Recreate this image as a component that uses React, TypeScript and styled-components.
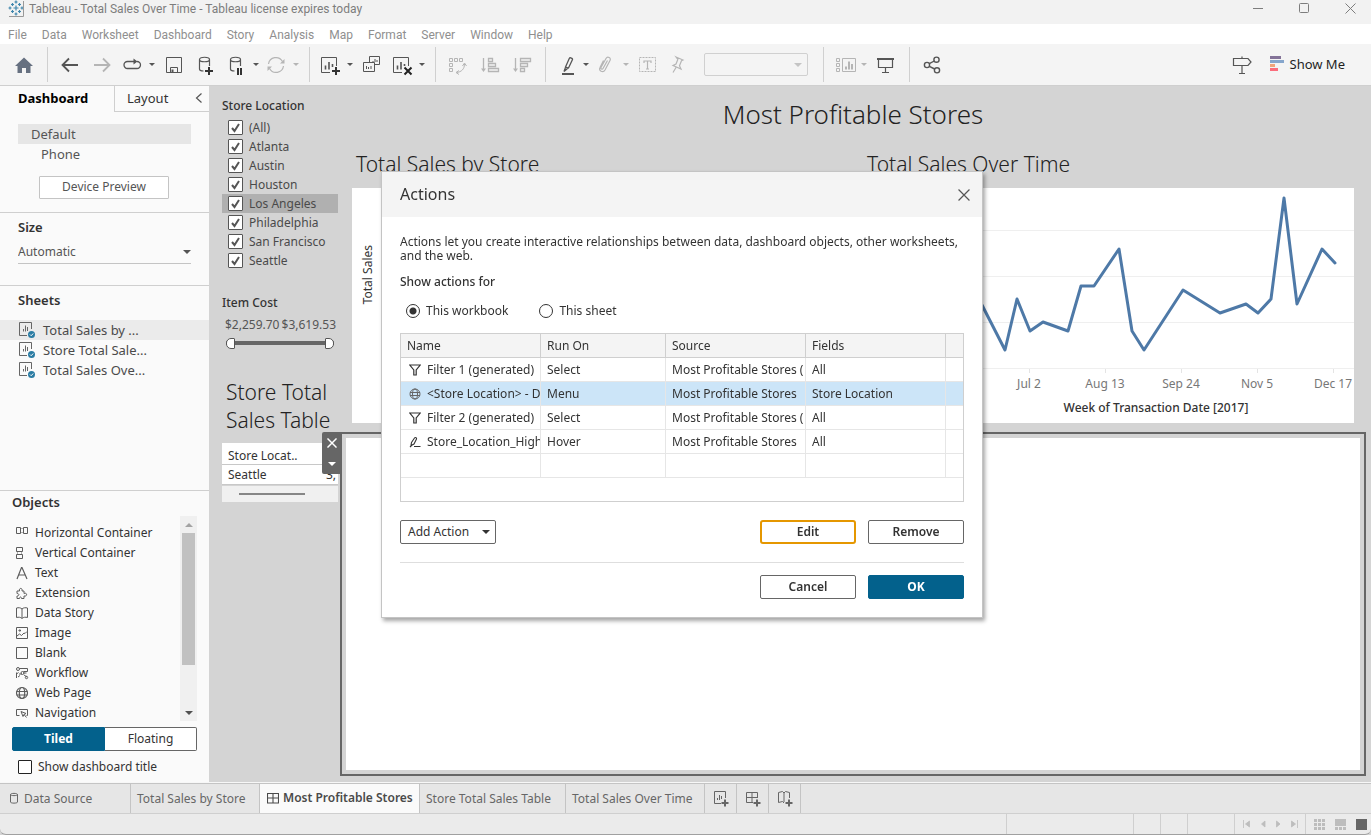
import React, { useState } from "react";
import styled, { createGlobalStyle, css } from "styled-components";

const GlobalStyle = createGlobalStyle`
  * { box-sizing: border-box; }
  body {
    margin: 0;
    background: #d4d4d4;
    color: #333;
    font-family: "Noto Sans", "Open Sans", sans-serif;
    font-size: 12px;
    line-height: 16px;
  }
  button, input, select { font: inherit; color: inherit; margin: 0; padding: 0; }
  button { background: none; border: 0; white-space: nowrap; }
  h1, h2, h3, p, ul { margin: 0; padding: 0; font-weight: 400; }
  ul { list-style: none; }
  svg { display: block; flex: none; }
`;

const Page = styled.div`
  display: flex;
  flex-direction: column;
  min-height: 100vh;
`;

/* ---------- window chrome ---------- */

const TitleBar = styled.header`
  display: flex;
  align-items: flex-start;
  height: 24px;
  padding-left: 8px;
  background: #f2f2f2;
  color: #7d7d7d;
  font-family: Roboto, "Noto Sans", sans-serif;
`;

const WindowTitle = styled.h1`
  flex: 1;
  margin-left: 5px;
  font-size: 12px;
  line-height: 18px;
`;

const WindowButton = styled.button`
  display: grid;
  place-items: center;
  width: 46px;
  height: 17px;
  padding-left: 4px;
`;

const MenuBar = styled.nav`
  display: flex;
  gap: 15px;
  height: 20px;
  padding-left: 8px;
  background: #fff;
  font-family: Roboto, "Noto Sans", sans-serif;
`;

const MenuLink = styled.a`
  color: #8f8f8f;
  font-size: 12px;
  line-height: 22px;
  text-decoration: none;
`;

const Toolbar = styled.div`
  display: flex;
  align-items: center;
  height: 42px;
  padding-left: 8px;
  background: #f4f4f4;
  border-bottom: 1px solid #cfcfcf;
`;

const ToolButton = styled.button<{ $wide?: boolean; $dim?: boolean }>`
  display: grid;
  place-items: center;
  flex: none;
  width: ${(p) => (p.$wide ? 32 : 28)}px;
  height: 32px;
  color: ${(p) => (p.$dim ? "#b5b5b5" : "#555")};
`;

const CaretButton = styled.button<{ $dim?: boolean }>`
  display: grid;
  place-items: center;
  flex: none;
  width: 12px;
  height: 32px;
  color: ${(p) => (p.$dim ? "#b5b5b5" : "#555")};
`;

const Divider = styled.span`
  flex: none;
  width: 1px;
  height: 35px;
  margin: 0 6px 0 7px;
  background: #d0d0d0;
`;

const FitBox = styled.label`
  display: flex;
  align-items: center;
  width: 104px;
  height: 23px;
  margin: 0 8px 0 12px;
  padding-right: 5px;
  border: 1px solid #d0d0d0;
  border-radius: 2px;
  color: #c4c4c4;
`;

const BareSelect = styled.select`
  flex: 1;
  min-width: 0;
  border: 0;
  outline: 0;
  background: none;
  appearance: none;
`;

const Spacer = styled.span`
  flex: 1;
`;

const ShowMe = styled.button`
  display: flex;
  align-items: center;
  gap: 5px;
  margin: 0 26px 0 14px;
  padding-bottom: 1px;
  color: #1f1f1f;
  font-size: 13px;
`;

/* ---------- side panel ---------- */

const Workspace = styled.main`
  display: flex;
  flex: 1;
  border-bottom: 1px solid #f7f7f7;
`;

const SidePanel = styled.aside`
  display: flex;
  flex-direction: column;
  flex: none;
  width: 209px;
  background: #fafafa;
`;

const PanelTabs = styled.div`
  display: flex;
  height: 26px;
  font-size: 13px;
`;

const PanelTab = styled.button<{ $active?: boolean }>`
  width: ${(p) => (p.$active ? 114 : 66)}px;
  padding: 0 0 2px ${(p) => (p.$active ? 18 : 12)}px;
  text-align: left;
  color: ${(p) => (p.$active ? "#000" : "#333")};
  font-weight: ${(p) => (p.$active ? 700 : 400)};
  ${(p) => !p.$active && css`
    border-left: 1px solid #cfcfcf;
    border-bottom: 1px solid #cfcfcf;
  `}
`;

const CollapseButton = styled.button`
  flex: 1;
  display: grid;
  place-items: center;
  padding: 0 0 2px 9px;
  border-bottom: 1px solid #cfcfcf;
  color: #555;
`;

const DeviceList = styled.ul`
  margin: 12px 18px;
  font-size: 13px;
  line-height: 20px;
`;

const DeviceItem = styled.li<{ $selected?: boolean }>`
  padding-left: ${(p) => (p.$selected ? 13 : 23)}px;
  background: ${(p) => (p.$selected ? "#e6e6e6" : "transparent")};
  color: #555;
`;

const PreviewButton = styled.button`
  align-self: flex-start;
  width: 130px;
  height: 23px;
  margin: 0 0 13px 39px;
  padding-bottom: 2px;
  border: 1px solid #c4c4c4;
  border-radius: 1px;
  color: #555;
  background: #fff;
`;

const Section = styled.section<{ $height?: number; $grow?: boolean; $tight?: boolean }>`
  border-top: 1px solid #cfcfcf;
  padding-top: ${(p) => (p.$tight ? 3 : 6)}px;
  flex: ${(p) => (p.$grow ? 1 : "none")};
  height: ${(p) => (p.$height ? p.$height + "px" : "auto")};
`;

const SectionTitle = styled.h2<{ $inset?: number }>`
  padding-left: ${(p) => p.$inset ?? 18}px;
  font-size: 13px;
  font-weight: 600;
`;

const SizeField = styled.label`
  display: flex;
  align-items: center;
  height: 24px;
  margin: 5px 18px 0;
  border-bottom: 1px solid #c4c4c4;
  color: #555;
`;

const SheetList = styled.ul`
  margin-top: 12px;
  font-size: 13px;
  line-height: 20px;
`;

const SheetItem = styled.li<{ $selected?: boolean }>`
  display: flex;
  align-items: center;
  gap: 7px;
  height: 20px;
  padding-left: 18px;
  background: ${(p) => (p.$selected ? "#ebebeb" : "transparent")};
  color: #4a4a4a;
`;

const ObjectsBox = styled.div`
  display: flex;
  height: 205px;
  margin: 6px 12px;
  overflow: hidden;
`;

const ObjectList = styled.ul`
  flex: 1;
  padding-top: 7px;
`;

const ObjectItem = styled.li`
  display: flex;
  align-items: center;
  gap: 6px;
  height: 20px;
  padding-left: 3px;
`;

const ScrollTrack = styled.div`
  display: flex;
  flex-direction: column;
  justify-content: space-between;
  align-items: center;
  width: 17px;
  background: #f0f0f0;
  color: #a3a3a3;
`;

const ScrollArrow = styled.span<{ $down?: boolean }>`
  display: grid;
  place-items: center;
  height: 17px;
  color: ${(p) => (p.$down ? "#505050" : "#a3a3a3")};
`;

const ScrollThumb = styled.span`
  width: 13px;
  height: 132px;
  margin-bottom: auto;
  background: #c1c1c1;
`;

const LayoutSwitch = styled.div`
  display: flex;
  height: 24px;
  margin: 0 12px;
`;

const SwitchButton = styled.button<{ $on?: boolean }>`
  flex: 1;
  border: 1px solid ${(p) => (p.$on ? "#03618c" : "#666")};
  border-left-width: ${(p) => (p.$on ? 1 : 0)}px;
  border-radius: ${(p) => (p.$on ? "2px 0 0 2px" : "0 2px 2px 0")};
  background: ${(p) => (p.$on ? "#03618c" : "#fff")};
  color: ${(p) => (p.$on ? "#fff" : "#333")};
  font-weight: ${(p) => (p.$on ? 700 : 400)};
`;

const TitleToggle = styled.label`
  display: flex;
  align-items: center;
  gap: 6px;
  height: 31px;
  padding-left: 18px;
`;

const PlainCheck = styled.input`
  appearance: none;
  width: 14px;
  height: 14px;
  border: 1px solid #222;
  border-radius: 1px;
  background: #fff;
`;

/* ---------- dashboard canvas ---------- */

const Canvas = styled.div`
  display: flex;
  gap: 2px;
  flex: 1;
  min-width: 0;
  padding: 12px 5px 6px 13px;
  background: #d4d4d4;
`;

const FilterColumn = styled.div`
  flex: none;
  width: 116px;
`;

const FilterTitle = styled.h3`
  font-size: 12px;
  line-height: 15px;
  font-weight: 500;
`;

const FilterRow = styled.label<{ $selected?: boolean }>`
  display: flex;
  align-items: center;
  gap: 6px;
  height: 19px;
  padding-left: 6px;
  background: ${(p) => (p.$selected ? "#b0b0b0" : "transparent")};
  color: #4a4a4a;
`;

const FilterRows = styled.div`
  margin: 5px 0 25px;
`;

const CheckWrap = styled.span`
  display: grid;
  & > * { grid-area: 1 / 1; }
  place-items: center;
  color: #555;
  pointer-events: none;
`;

const FilterCheck = styled.input`
  appearance: none;
  width: 15px;
  height: 15px;
  border: 1px solid #555;
  border-radius: 1px;
  background: #fff;
`;

const RangeValues = styled.div`
  display: flex;
  justify-content: space-between;
  margin-top: 7px;
  padding: 0 2px 0 3px;
  color: #555;
  white-space: nowrap;
`;

const RangeSlider = styled.div`
  position: relative;
  height: 11px;
  margin: 5px 4px 0;
`;

const RangeTrack = styled.div`
  height: 7px;
  border-bottom: 4px solid #666;
`;

const RangeInput = styled.input<{ $end?: boolean }>`
  position: absolute;
  inset: 0;
  width: 100%;
  height: 11px;
  appearance: none;
  background: none;
  pointer-events: none;
  &::-webkit-slider-thumb {
    appearance: none;
    width: 9px;
    height: 11px;
    border: 1px solid #555;
    border-radius: ${(p) => (p.$end ? "1px 5px 5px 1px" : "5px 1px 1px 5px")};
    background: #fff;
    pointer-events: auto;
  }
`;

const SideTitle = styled.h2`
  margin: 29px 0 9px;
  padding-left: 4px;
  font-size: 21px;
  line-height: 28px;
  font-weight: 300;
  color: #222;
`;

const MiniTable = styled.table`
  width: 100%;
  border-collapse: separate;
  border-spacing: 0;
  table-layout: fixed;
  background: #fff;
  th, td {
    height: 20px;
    padding: 0 0 0 6px;
    border-bottom: 1px solid #c8c8c8;
    text-align: left;
    font-size: 12px;
    font-weight: 400;
    white-space: nowrap;
    overflow: hidden;
  }
  th { height: 22px; padding-top: 4px; }
  td:last-child { padding: 0 2px 0 0; text-align: right; }
`;

const MiniScroll = styled.div`
  display: flex;
  align-items: center;
  height: 16px;
  margin-top: 1px;
  padding-left: 17px;
  background: #f0f0f0;
`;

const MiniThumb = styled.span`
  width: 66px;
  height: 2px;
  background: #868686;
`;

const Board = styled.div`
  display: flex;
  flex-direction: column;
  flex: 1;
  min-width: 0;
`;

const BoardTitle = styled.h2`
  height: 33px;
  font-size: 26px;
  line-height: 32px;
  font-weight: 300;
  text-align: center;
  color: #222;
`;

const ChartGrid = styled.div`
  display: grid;
  grid-template-columns: 1fr 1fr;
  gap: 20px;
  padding: 20px 12px 9px;
`;

const ChartTitle = styled.h3`
  height: 37px;
  padding-left: 4px;
  font-size: 21px;
  line-height: 26px;
  font-weight: 300;
  color: #222;
`;

const ChartPane = styled.div`
  display: flex;
  align-items: flex-start;
  height: 235px;
  background: #fff;
  overflow: hidden;
`;

const AxisTitle = styled.span`
  margin: 57px 0 0 8px;
  writing-mode: vertical-rl;
  transform: rotate(180deg);
`;

const Frame = styled.section`
  position: relative;
  display: flex;
  flex: 1;
  padding: 4px;
  border: 2px solid #666;
`;

const FrameBody = styled.div`
  flex: 1;
  background: #fff;
`;

const FrameTools = styled.div`
  position: absolute;
  top: -2px;
  left: -20px;
  display: flex;
  flex-direction: column;
  width: 19px;
  height: 42px;
  border-radius: 2px 0 0 2px;
  background: #666;
  color: #fff;
`;

const FrameTool = styled.button`
  flex: 1;
  display: grid;
  place-items: center;
`;

/* ---------- actions dialog ---------- */

const Dialog = styled.dialog`
  position: fixed;
  top: 171px;
  left: 381px;
  width: 602px;
  margin: 0;
  padding: 0;
  border: 1px solid #c4c4c4;
  background: #fff;
  color: #333;
  box-shadow: 2px 3px 4px rgba(0, 0, 0, 0.35);
`;

const DialogHeader = styled.div`
  display: flex;
  align-items: center;
  justify-content: space-between;
  height: 45px;
  padding: 0 12px 0 18px;
  background: #f4f4f4;
`;

const DialogTitle = styled.h2`
  padding-bottom: 1px;
  font-size: 16px;
  line-height: 22px;
`;

const CloseButton = styled.button`
  color: #555;
`;

const DialogBody = styled.div`
  padding: 18px;
`;

const Intro = styled.p`
  line-height: 14px;
`;

const RadioGroup = styled.fieldset`
  margin: 11px 0 14px;
  padding: 0;
  border: 0;
`;

const GroupLabel = styled.legend`
  padding: 0;
  font-weight: 500;
`;

const RadioRow = styled.div`
  display: flex;
  gap: 31px;
  padding: 13px 0 0 6px;
`;

const RadioLabel = styled.label`
  display: flex;
  align-items: center;
  gap: 6px;
`;

const Radio = styled.input`
  appearance: none;
  width: 14px;
  height: 14px;
  border: 1px solid #333;
  border-radius: 50%;
  background: #fff;
  &:checked { background: radial-gradient(circle, #333 0 3px, #fff 4px); }
`;

const TableBox = styled.div`
  height: 169px;
  border: 1px solid #cfcfcf;
`;

const ActionTable = styled.table`
  width: 100%;
  border-collapse: separate;
  border-spacing: 0;
  table-layout: fixed;
  th, td {
    height: 24px;
    padding: 0 0 0 6px;
    border-right: 1px solid #e6e6e6;
    border-bottom: 1px solid #e6e6e6;
    text-align: left;
    font-weight: 400;
    white-space: nowrap;
    overflow: hidden;
  }
  th {
    background: #f4f4f4;
    border-color: #cfcfcf;
  }
  th:last-child, td:last-child { border-right: 0; }
`;

const ActionRow = styled.tr<{ $selected?: boolean }>`
  background: ${(p) => (p.$selected ? "#cce5f8" : "#fff")};
`;

const NameCell = styled.span`
  display: flex;
  align-items: center;
  gap: 6px;
  padding-left: 2px;
`;

const ButtonRow = styled.div<{ $footer?: boolean }>`
  display: flex;
  gap: 12px;
  padding-top: ${(p) => (p.$footer ? 12 : 18)}px;
  margin-top: ${(p) => (p.$footer ? 18 : 0)}px;
  border-top: ${(p) => (p.$footer ? "1px solid #dedede" : "0")};
`;

const DialogButton = styled.button<{ $focus?: boolean; $primary?: boolean }>`
  width: 96px;
  height: 24px;
  border: ${(p) => (p.$focus ? "2px solid #e59700" : p.$primary ? "1px solid #03618c" : "1px solid #666")};
  border-radius: ${(p) => (p.$focus ? 3 : 2)}px;
  background: ${(p) => (p.$primary ? "#03618c" : "#fff")};
  color: ${(p) => (p.$primary ? "#fff" : "#333")};
  font-weight: ${(p) => (p.$primary ? 700 : 600)};
`;

const MenuButton = styled(DialogButton)`
  display: flex;
  align-items: center;
  justify-content: space-between;
  padding: 0 5px 0 7px;
  font-weight: 400;
`;

/* ---------- sheet tabs and status bar ---------- */

const SheetTabs = styled.div`
  display: flex;
  height: 31px;
  border-top: 1px solid #c4c4c4;
  border-bottom: 1px solid #cfcfcf;
  background: #e6e6e6;
`;

const SheetTab = styled.button<{ $width: number; $active?: boolean }>`
  display: flex;
  align-items: center;
  gap: 4px;
  flex: none;
  width: ${(p) => p.$width}px;
  padding: 0 0 ${(p) => (p.$active ? 2 : 0)}px 6px;
  border-right: 1px solid #c4c4c4;
  background: ${(p) => (p.$active ? "#fafafa" : "transparent")};
  font-weight: ${(p) => (p.$active ? 600 : 400)};
  color: ${(p) => (p.$active ? "#4a4a4a" : "#666")};
  svg { margin-left: 1px; }
`;

const StatusBar = styled.footer`
  display: flex;
  justify-content: flex-end;
  height: 21px;
  background: #ebebeb;
  border-bottom: 1px solid #a0a0a0;
  border-radius: 0 0 6px 6px;
`;

const StatusCell = styled.div<{ $width: number }>`
  display: flex;
  align-items: center;
  gap: ${(p) => (p.$width === 66 ? 10 : 8)}px;
  padding-left: 8px;
  width: ${(p) => p.$width}px;
  border-left: 1px solid #cfcfcf;
  color: #bdbdbd;
`;

/* ---------- drawings ---------- */

const Svg = ({ w = 24, h = w, children }: { w?: number; h?: number; children: React.ReactNode }) => (
  <svg width={w} height={h} viewBox={`0 0 ${w} ${h}`} fill="none" stroke="currentColor" strokeWidth="1" aria-hidden="true">
    {children}
  </svg>
);

const Caret = ({ up, small }: { up?: boolean; small?: boolean }) => (
  <svg width={small ? 6 : 8} height={small ? 3 : 4} viewBox="0 0 8 4" fill="currentColor" aria-hidden="true">
    <path d={up ? "M0 4 4 0l4 4z" : "M0 0h8L4 4z"} />
  </svg>
);

const Plus = ({ x, y }: { x: number; y: number }) => (
  <path stroke="#333" strokeWidth="2" d={`M${x - 4} ${y}h8M${x} ${y - 4}v8`} />
);

const Cylinder = ({ x }: { x: number }) => (
  <path strokeWidth="1.2" d={`M${x} 6.5c0-3 10-3 10 0s-10 3-10 0v9.5c0 1 1.5 2 4 2M${x + 10} 6.5V13`} />
);

const Cross = ({ size = 11, width = 1.3 }: { size?: number; width?: number }) => (
  <svg width={size} height={size} viewBox="0 0 11 11" fill="none" stroke="currentColor" strokeWidth={width} aria-hidden="true">
    <path d="M.5.5l10 10M10.5.5l-10 10" />
  </svg>
);

const icons: Record<string, React.ReactNode> = {
  home: <path fill="#667080" stroke="none" d="M12 4.500 21 13h-2.500v7H14v-5h-4v5H5.500v-7H3z" />,
  back: <path strokeWidth="1.800" d="M20 12H5M11 5.500 4.500 12l6.500 6.500" />,
  forward: <path strokeWidth="1.800" d="M4 12h15M13 5.500l6.500 6.500-6.500 6.500" />,
  redo: <><path strokeWidth="1.3" d="M14 8.500H7.500a3.500 3.500 0 0 0 0 7H17a3.500 3.500 0 0 0 0-7" /><path fill="currentColor" stroke="none" d="M13.500 5.500v6l4-3z" /></>,
  save: <><path d="M4.500 4.500h15v15h-15zM8.500 19.500v-5h7v5" /><path fill="currentColor" stroke="none" d="M9.500 16.500h2v3h-2z" /></>,
  addData: <><Cylinder x={5.5} /><Plus x={15} y={18} /></>,
  pauseData: <><Cylinder x={6.5} /><path stroke="#333" strokeWidth="2" d="M14 15v7M17 15v7" /></>,
  refresh: <><path strokeWidth="1.2" d="M4.500 11a7.500 7.500 0 0 1 14-2.500M19.500 13a7.500 7.500 0 0 1-14 2.500" /><path fill="currentColor" stroke="none" d="M20.500 6v4.500H16zM3.500 18v-4.500H8z" /></>,
  addSheet: <><path d="M12 19.500H3.500v-15h15V13" /><path strokeWidth="1.6" d="M7.500 16.500v-4M11 16.500V9M14.500 14v-3" /><Plus x={18} y={18} /></>,
  duplicate: <path d="M9.500 9V3.500h10v8h-4.500M3.500 9.500h11v9h-11zM6.500 16v-3M8.500 16v-2M11 16v-3M13 9V8M15 9V6M17 9V7" />,
  clear: <><path d="M12 19.500H3.500v-15h15V13" /><path strokeWidth="1.6" d="M7.500 16.500v-4M11 16.500V9M14.500 13v-2" /><path stroke="#222" strokeWidth="2" d="m14.500 14.500 7 7m0-7-7 7" /></>,
  swap: <><path d="M3.500 5.500h3v3h-3zM8.500 5.500h3v3h-3zM13.500 5.500h3v3h-3zM3.500 10.500h3v3h-3zM3.500 15.500h3v3h-3zM18.500 11c0 5-3 8-8 8.500" /><path d="m16.500 13 2-3 2 3M13 17.500l-3 2 3 2" /></>,
  sortUp: <><path strokeWidth="1.3" d="M5.500 5v12M10.500 5.500h4v3h-4zM10.500 10.500h7v3h-7zM10.500 15.500h10v3h-10z" /><path fill="currentColor" stroke="none" d="M3 15.500h5l-2.500 3.500z" /></>,
  sortDown: <><path strokeWidth="1.3" d="M5.500 5v12M10.500 5.500h10v3h-10zM10.500 10.500h7v3h-7zM10.500 15.500h4v3h-4z" /><path fill="currentColor" stroke="none" d="M3 15.500h5l-2.500 3.500z" /></>,
  highlight: <><path strokeWidth="1.300" d="m11.500 14 4-9c.3-.8 3.500.4 3 1.500l-4 8.500zM11.500 14l3 1M11.500 14.500 10 18.500l3.500-3" /><path strokeWidth="2" d="M8 21h12" /></>,
  clip: <path strokeWidth="1.200" d="m13.500 7.500-4.500 8c-.7 1.400-2.700.4-2-1l5-9c1.400-2.500 5.500-.8 4 2l-5 9.500c-1.800 3-7 1-5-2.500l3.500-7" />,
  text: <><path strokeDasharray="2 1" d="M3.500 4.500h16v14h-16z" /><path strokeWidth="1.2" d="M8 10V8h7v2M11.500 8v8M10 16h3" /></>,
  pin: <path strokeWidth="1.200" d="m10 4 7 3-1.500.8-2 5 1.500 3.200-8-3.500 3-1.500 1.800-4.500zM10 14.500 7 19.500" />,
  fit: <><path d="M4.500 5.500h3v3h-3zM4.500 10.500h3v3h-3zM4.500 15.500h3v3h-3zM10.500 5.500h13v13h-13z" /><path strokeWidth="2" d="M14 16.500v-3M17 16.500v-8M20 16.500V11" /></>,
  present: <><path strokeWidth="2" d="M3 6h17" /><path strokeWidth="1.2" d="M4.500 6v8.500h14V6M11.500 15v4.500M8 19.500h7" /></>,
  share: <g strokeWidth="1.400"><circle cx="7" cy="12" r="2.600" /><circle cx="16.500" cy="6.700" r="2.600" /><circle cx="17" cy="17.300" r="2.600" /><path d="m9.300 10.700 5-2.700M9.300 13.300l5.400 2.700" /></g>,
  signpost: <path strokeWidth="1.200" d="M3.500 5.500H18l3 3.500-3 3.500H3.500zM12 3.500v2M12 12.500v8M9 20.500h6" />,
};

const objectIcons: Record<string, React.ReactNode> = {
  horizontal: <><path d="M1.500 1.500h4v6h-4zM8.500 1.500h4v6h-4z" /><path stroke="#b0b0b0" d="M6 2.500h2M6 6.500h2" /></>,
  vertical: <><path d="M1.500 1.500h6v4h-6zM1.500 8.500h6v4h-6z" /><path stroke="#b0b0b0" d="M2.500 6v2M6.500 6v2" /></>,
  text: <path strokeWidth="1.2" d="M2 13 6.500 1.500h.5L12 13M3.500 9h7" />,
  extension: <path d="M2 5h2.500c-1-3.500 3.500-3.500 2.500 0H9v2.500c3.500-1.500 3.500 3.500 0 2.500v2.500H6.500c0-2-2-2-2 0H2V10c2.500 0 2.500-2.500 0-2.500z" />,
  story: <path d="M7 3C5.500 1.500 3.500 1.500 1.500 2v9.500c2-.5 4-.500 5.500 1 1.500-1.500 3.500-1.500 5.500-1V2C10.500 1.500 8.500 1.500 7 3zv9" />,
  image: <path d="M1.500 1.500h11v11h-11zM2 10l2.500-2 2 1.500L9 7l1 .5 2-2M4 4h1.500v1H4z" />,
  blank: <path d="M1.500 1.500h11v11h-11z" />,
  workflow: <g><circle cx="3" cy="3" r="1.500" /><path d="M4.500 2.500h8v3h-4M4 8h3M1.500 6.500V12M1.500 8l2-1.500M3 11l2-1.500M8 7h3.500M9 9l3 2" /><circle cx="7.500" cy="7" r="1.500" /><circle cx="11.500" cy="11.500" r="1.200" /></g>,
  web: <g strokeWidth="1.200"><circle cx="7" cy="7" r="5.500" /><ellipse cx="7" cy="7" rx="2.700" ry="5.500" /><path d="M1.500 5.500h11M1.500 9h11" /></g>,
  navigation: <path d="M4.500 9.500h-3v-6h11v6h-1M6 5.500l5 2-2 1-1 2zM9 8.500l2.500 3" />,
};

const Globe = () => (
  <Svg w={12}><g stroke="#666"><circle cx="6" cy="6" r="5" /><ellipse cx="6" cy="6" rx="2.500" ry="5" /><path d="M1 4.500h10M1 7.500h10" /></g></Svg>
);
const Funnel = () => <Svg w={12}><path strokeWidth="1.200" d="M.8 1h10.400L7.200 6v5H4.800V6z" /></Svg>;
const Pen = () => <Svg w={12}><path strokeWidth="1.100" d="M2.500 6.500 5.500 2c.8-1 2.500 0 2 1L5 8 2 9.500zM1 11l2-2M5 10.500h6.500" /></Svg>;

const Logo = () => (
  <svg width="16" height="17" viewBox="0 0 16 17" stroke="#3f86ad" strokeWidth="1.200" aria-hidden="true">
    <path fill="none" d="M8 5.500v5M5.500 8h5M8 .5v3M6.500 2h3M8 12.500v3M6.500 14h3M.5 8h3M2 6.500v3M12.500 8h3M14 6.500v3M4.500 3v3M3 4.500h3M11.500 3v3M10 4.500h3M4.500 10v3M3 11.500h3M11.500 10v3M10 11.500h3" />
    <path fill="none" stroke="#999" strokeWidth="1" d="M15.500 1v15.500H1" />
  </svg>
);

const SheetIcon = () => (
  <Svg w={18}>
    <path stroke="#666" d="M9 14.500H1.500v-13h12V8M5.500 10.500V8M7.500 10.500v-6M9.500 10V6" />
    <circle cx="13.500" cy="13.500" r="3.500" fill="#2b7ca3" stroke="none" />
    <path stroke="#fff" d="m12 13.500 1.200 1.200 2-2.200" />
  </Svg>
);

const GridIcon = () => <Svg w={12}><path strokeWidth="1.100" d="M.5 1.500h11v9.500H.5zM6 1.500V11M.5 6h11" /></Svg>;
const DbIcon = () => <Svg w={13}><path d="M3.500 2.500c0-1.500 7-1.500 7 0s-7 1.500-7 0V10c0 1.500 7 1.500 7 0V2.500" /></Svg>;

const newTabIcons: Record<string, React.ReactNode> = {
  worksheet: <path d="M9 13.500H2.500v-12h11V8M5.500 10V8M7.500 10V5M9.500 9V6" />,
  dashboard: <path d="M9 12.500H2.500v-10h11V8M8 2.500v10M2.500 7.500h11" />,
  story: <path d="M8 13 6.500 11.500l-4 1V2.500l4-1L8 3l1.500-1.500 4 1V8M8 3v9" />,
};

const linePoints =
  "88,60 104,134 119,117 142,162 154,111 167,143 180,134 205,143 218,98 231,98 256,61 269,143 281,162 320,102 357,125 383,116 395,125 408,111 421,10 434,116 459,61 472,75";
const weekLabels: [number, string][] = [[166, "Jul 2"], [242, "Aug 13"], [318, "Sep 24"], [394, "Nov 5"], [470, "Dec 17"]];

const LineChart = () => (
  <svg width="100%" height="235" viewBox="0 0 491 235" preserveAspectRatio="xMaxYMin meet" role="img" aria-label="Total sales by week">
    <path d="M95 42.500h396M95 88.500h396M95 134.500h396M95 180.500h396" stroke="#efefef" fill="none" />
    {weekLabels.map(([x]) => <path key={x} d={`M${x + 0.5} 181v4`} stroke="#e4e4e4" />)}
    <polyline points={linePoints} fill="none" stroke="#4e79a7" strokeWidth="3" strokeLinejoin="round" strokeLinecap="round" />
    <g fill="#777" fontSize="12" textAnchor="middle">
      {weekLabels.map(([x, label]) => <text key={label} x={x} y="200">{label}</text>)}
    </g>
    <text x="293" y="224" fill="#333" fontSize="12" fontWeight="500" textAnchor="middle">Week of Transaction Date [2017]</text>
  </svg>
);

/* ---------- data ---------- */

const menus = ["File", "Data", "Worksheet", "Dashboard", "Story", "Analysis", "Map", "Format", "Server", "Window", "Help"];

type ToolDef = { icon: string; label: string; dim?: boolean; caret?: boolean; narrow?: boolean };
const toolGroups: ToolDef[][] = [
  [{ icon: "home", label: "Start page" }],
  [
    { icon: "back", label: "Undo" },
    { icon: "forward", label: "Redo", dim: true },
    { icon: "redo", label: "Replay", caret: true },
    { icon: "save", label: "Save" },
    { icon: "addData", label: "New data source" },
    { icon: "pauseData", label: "Pause updates", caret: true },
    { icon: "refresh", label: "Run update", caret: true, dim: true },
  ],
  [
    { icon: "addSheet", label: "New worksheet", caret: true },
    { icon: "duplicate", label: "Duplicate" },
    { icon: "clear", label: "Clear sheet", caret: true },
  ],
  [
    { icon: "swap", label: "Swap rows and columns", dim: true },
    { icon: "sortUp", label: "Sort ascending", dim: true },
    { icon: "sortDown", label: "Sort descending", dim: true },
  ],
  [
    { icon: "highlight", label: "Highlight", caret: true },
    { icon: "clip", label: "Group members", caret: true, dim: true },
    { icon: "text", label: "Show mark labels", dim: true },
    { icon: "pin", label: "Fix axes", dim: true, narrow: true },
  ],
  [
    { icon: "fit", label: "Show cards", caret: true, dim: true },
    { icon: "present", label: "Presentation mode" },
  ],
  [{ icon: "share", label: "Share" }],
];

const stores = ["(All)", "Atlanta", "Austin", "Houston", "Los Angeles", "Philadelphia", "San Francisco", "Seattle"];

const objects: [string, string][] = [
  ["horizontal", "Horizontal Container"],
  ["vertical", "Vertical Container"],
  ["text", "Text"],
  ["extension", "Extension"],
  ["story", "Data Story"],
  ["image", "Image"],
  ["blank", "Blank"],
  ["workflow", "Workflow"],
  ["web", "Web Page"],
  ["navigation", "Navigation"],
];

const actions = [
  { icon: <Funnel />, name: "Filter 1 (generated)", run: "Select", source: "Most Profitable Stores (", fields: "All" },
  { icon: <Globe />, name: "<Store Location> - D", run: "Menu", source: "Most Profitable Stores", fields: "Store Location" },
  { icon: <Funnel />, name: "Filter 2 (generated)", run: "Select", source: "Most Profitable Stores (", fields: "All" },
  { icon: <Pen />, name: "Store_Location_High", run: "Hover", source: "Most Profitable Stores", fields: "All" },
];

/* ---------- parts ---------- */

function Tools() {
  return (
    <Toolbar role="toolbar">
      {toolGroups.map((group, g) => (
        <React.Fragment key={g}>
          {g > 0 && <Divider />}
          {group.map((t) => (
            <React.Fragment key={t.icon}>
              <ToolButton aria-label={t.label} $wide={!t.caret && !t.narrow} $dim={t.dim}>
                <Svg>{icons[t.icon]}</Svg>
              </ToolButton>
              {t.caret && <CaretButton aria-label={`${t.label} options`} $dim={t.dim}><Caret small /></CaretButton>}
            </React.Fragment>
          ))}
          {g === 4 && (
            <FitBox>
              <BareSelect aria-label="Fit" disabled><option /></BareSelect>
              <Caret />
            </FitBox>
          )}
        </React.Fragment>
      ))}
      <Spacer />
      <ToolButton aria-label="Data guide"><Svg>{icons.signpost}</Svg></ToolButton>
      <ShowMe>
        <svg width="15" height="16" viewBox="0 0 15 16" aria-hidden="true">
          <path fill="#847398" d="M0 0h11v3H0z" /><path fill="#86a6cc" d="M0 4h14v3H0z" />
          <path fill="#f0a57c" d="M0 8h5v3H0z" /><path fill="#fb6d7c" d="M0 12h8v3H0z" />
        </svg>
        Show Me
      </ShowMe>
    </Toolbar>
  );
}

function Side() {
  return (
    <SidePanel>
      <PanelTabs>
        <PanelTab $active>Dashboard</PanelTab>
        <PanelTab>Layout</PanelTab>
        <CollapseButton aria-label="Collapse"><Svg w={8} h={10}><path strokeWidth="1.200" d="M6.500.5 1.500 5l5 4.500" /></Svg></CollapseButton>
      </PanelTabs>
      <DeviceList>
        <DeviceItem $selected>Default</DeviceItem>
        <DeviceItem>Phone</DeviceItem>
      </DeviceList>
      <PreviewButton>Device Preview</PreviewButton>
      <Section $height={73}>
        <SectionTitle>Size</SectionTitle>
        <SizeField>
          <BareSelect aria-label="Size"><option>Automatic</option></BareSelect>
          <Caret />
        </SizeField>
      </Section>
      <Section $grow>
        <SectionTitle>Sheets</SectionTitle>
        <SheetList>
          {["Total Sales by ...", "Store Total Sale...", "Total Sales Ove..."].map((s, i) => (
            <SheetItem key={s} $selected={i === 0}><SheetIcon />{s}</SheetItem>
          ))}
        </SheetList>
      </Section>
      <Section $tight>
        <SectionTitle $inset={12}>Objects</SectionTitle>
        <ObjectsBox>
          <ObjectList>
            {objects.map(([icon, label]) => (
              <ObjectItem key={icon}><Svg w={14}><g stroke="#5c5c5c">{objectIcons[icon]}</g></Svg>{label}</ObjectItem>
            ))}
          </ObjectList>
          <ScrollTrack>
            <ScrollArrow><Caret up /></ScrollArrow>
            <ScrollThumb />
            <ScrollArrow $down><Caret /></ScrollArrow>
          </ScrollTrack>
        </ObjectsBox>
        <LayoutSwitch>
          <SwitchButton $on>Tiled</SwitchButton>
          <SwitchButton>Floating</SwitchButton>
        </LayoutSwitch>
        <TitleToggle><PlainCheck type="checkbox" />Show dashboard title</TitleToggle>
      </Section>
    </SidePanel>
  );
}

function Filters() {
  return (
    <FilterColumn>
      <FilterTitle>Store Location</FilterTitle>
      <FilterRows>
        {stores.map((s) => (
          <FilterRow key={s} $selected={s === "Los Angeles"}>
            <CheckWrap>
              <FilterCheck type="checkbox" defaultChecked />
              <Svg w={11}><path strokeWidth="2" d="m2 6 2.500 3L9 2" /></Svg>
            </CheckWrap>
            {s}
          </FilterRow>
        ))}
      </FilterRows>
      <FilterTitle>Item Cost</FilterTitle>
      <RangeValues><span>$2,259.70</span><span>$3,619.53</span></RangeValues>
      <RangeSlider>
        <RangeTrack />
        <RangeInput type="range" aria-label="Minimum item cost" defaultValue={0} />
        <RangeInput type="range" aria-label="Maximum item cost" defaultValue={100} $end />
      </RangeSlider>
      <SideTitle>Store Total Sales Table</SideTitle>
      <MiniTable>
        <colgroup><col /><col width="24" /></colgroup>
        <thead><tr><th>Store Locat..</th><th /></tr></thead>
        <tbody><tr><td>Seattle</td><td>3,</td></tr></tbody>
      </MiniTable>
      <MiniScroll><MiniThumb /></MiniScroll>
    </FilterColumn>
  );
}

function ActionsDialog() {
  const [scope, setScope] = useState("workbook");
  return (
    <Dialog open aria-label="Actions">
      <DialogHeader>
        <DialogTitle>Actions</DialogTitle>
        <CloseButton aria-label="Close"><Cross size={12} width={1.1} /></CloseButton>
      </DialogHeader>
      <DialogBody>
        <Intro>Actions let you create interactive relationships between data, dashboard objects, other worksheets, and the web.</Intro>
        <RadioGroup>
          <GroupLabel>Show actions for</GroupLabel>
          <RadioRow>
            {[["workbook", "This workbook"], ["sheet", "This sheet"]].map(([id, label]) => (
              <RadioLabel key={id}>
                <Radio type="radio" name="scope" checked={scope === id} onChange={() => setScope(id)} />
                {label}
              </RadioLabel>
            ))}
          </RadioRow>
        </RadioGroup>
        <TableBox>
          <ActionTable>
            <colgroup><col width="140" /><col width="125" /><col width="140" /><col width="140" /><col /></colgroup>
            <thead><tr><th>Name</th><th>Run On</th><th>Source</th><th>Fields</th><th /></tr></thead>
            <tbody>
              {actions.map((a, i) => (
                <ActionRow key={a.name} $selected={i === 1}>
                  <td><NameCell>{a.icon}{a.name}</NameCell></td>
                  <td>{a.run}</td><td>{a.source}</td><td>{a.fields}</td><td />
                </ActionRow>
              ))}
              <ActionRow><td /><td /><td /><td /><td /></ActionRow>
            </tbody>
          </ActionTable>
        </TableBox>
        <ButtonRow>
          <MenuButton>Add Action <Caret /></MenuButton>
          <Spacer />
          <DialogButton $focus>Edit</DialogButton>
          <DialogButton>Remove</DialogButton>
        </ButtonRow>
        <ButtonRow $footer>
          <Spacer />
          <DialogButton>Cancel</DialogButton>
          <DialogButton $primary>OK</DialogButton>
        </ButtonRow>
      </DialogBody>
    </Dialog>
  );
}

const statusArrows = ["M.5 0v8M6.500 1v6L2.500 4z", "M6 1v6L2.500 4z", "M1.500 1v6L5 4z", "M6.500 0v8M.5 1v6l4-3z"];

export default function App() {
  return (
    <Page>
      <GlobalStyle />
      <TitleBar>
        <Logo />
        <WindowTitle>Tableau - Total Sales Over Time - Tableau license expires today</WindowTitle>
        <WindowButton aria-label="Minimize"><Svg w={11}><path d="M0 5.500h10" /></Svg></WindowButton>
        <WindowButton aria-label="Maximize"><Svg w={11}><rect x=".5" y=".5" width="9" height="9" rx="1" /></Svg></WindowButton>
        <WindowButton aria-label="Close window"><Cross width={1} /></WindowButton>
      </TitleBar>
      <MenuBar>{menus.map((m) => <MenuLink key={m} href="#">{m}</MenuLink>)}</MenuBar>
      <Tools />
      <Workspace>
        <Side />
        <Canvas>
          <Filters />
          <Board>
            <BoardTitle>Most Profitable Stores</BoardTitle>
            <ChartGrid>
              <div>
                <ChartTitle>Total Sales by Store</ChartTitle>
                <ChartPane><AxisTitle>Total Sales</AxisTitle></ChartPane>
              </div>
              <div>
                <ChartTitle>Total Sales Over Time</ChartTitle>
                <ChartPane><LineChart /></ChartPane>
              </div>
            </ChartGrid>
            <Frame>
              <FrameBody />
              <FrameTools>
                <FrameTool aria-label="Remove from dashboard"><Cross size={10} width={1.6} /></FrameTool>
                <FrameTool aria-label="More options"><Caret /></FrameTool>
              </FrameTools>
            </Frame>
          </Board>
        </Canvas>
      </Workspace>
      <SheetTabs>
        <SheetTab $width={131}><DbIcon />Data Source</SheetTab>
        <SheetTab $width={129}>Total Sales by Store</SheetTab>
        <SheetTab $width={160} $active><GridIcon />Most Profitable Stores</SheetTab>
        <SheetTab $width={146}>Store Total Sales Table</SheetTab>
        <SheetTab $width={139}>Total Sales Over Time</SheetTab>
        {Object.entries(newTabIcons).map(([k, d]) => (
          <SheetTab key={k} $width={32} aria-label={`New ${k}`}>
            <Svg w={18}>{d}<path strokeWidth="2" d="M9.500 13h7M13 9.500v7" /></Svg>
          </SheetTab>
        ))}
      </SheetTabs>
      <StatusBar>
        <StatusCell $width={127} /><StatusCell $width={27} /><StatusCell $width={27} /><StatusCell $width={47} />
        <StatusCell $width={71}>
          {statusArrows.map((d) => <svg key={d} width="8" height="8" viewBox="0 0 8 8" fill="currentColor" stroke="currentColor" strokeWidth=".8"><path d={d} /></svg>)}
        </StatusCell>
        <StatusCell $width={66}>
          <svg width="11" height="11" viewBox="0 0 11 11" fill="currentColor"><path d="M0 0h3v3H0zM4 0h3v3H4zM8 0h3v3H8zM0 4h3v3H0zM4 4h3v3H4zM8 4h3v3H8zM0 8h3v3H0zM4 8h3v3H4zM8 8h3v3H8z" /></svg>
          <svg width="11" height="11" viewBox="0 0 11 11" fill="currentColor"><path d="M0 0h11v7H0zM0 8h3v3H0zM4 8h3v3H4zM8 8h3v3H8z" /></svg>
          <svg width="11" height="11" viewBox="0 0 11 11" fill="#666"><path d="M0 0h11v11H0z" /></svg>
        </StatusCell>
      </StatusBar>
      <ActionsDialog />
    </Page>
  );
}
